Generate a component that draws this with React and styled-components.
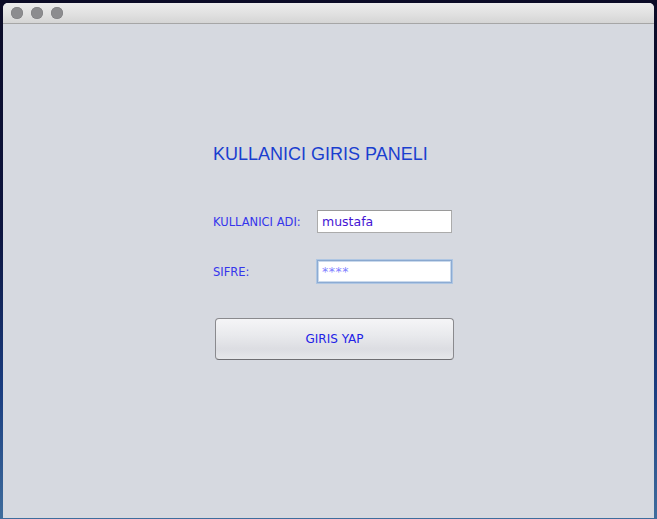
import React from "react";
import styled, { createGlobalStyle } from "styled-components";

const Global = createGlobalStyle`
  html, body { margin: 0; padding: 0; }
  body { width: 657px; height: 519px; overflow: hidden; }
`;

const Desktop = styled.div`
  width: 657px;
  height: 519px;
  box-sizing: border-box;
  padding: 3px 3px 1px 3px;
  display: flex;
  background: linear-gradient(180deg, #0b0b26 0%, #0d1540 45%, #1a3d80 75%, #3f6d9d 100%);
`;

const Window = styled.div`
  flex: 1;
  display: flex;
  flex-direction: column;
  border-radius: 5px 5px 0 0;
  overflow: hidden;
  background: #d6d9e0;
`;

const TitleBar = styled.div`
  height: 20px;
  flex: none;
  display: flex;
  align-items: center;
  gap: 8px;
  padding-left: 8px;
  background: linear-gradient(180deg, #ececec 0%, #e2e2e2 50%, #d5d5d5 100%);
  border-bottom: 1px solid #a6a6a6;
`;

const Light = styled.span`
  width: 12px;
  height: 12px;
  border-radius: 50%;
  background: #8c8c8f;
  box-shadow: inset 0 0 0 0.5px #7a7a7d;
`;

const Content = styled.div`
  flex: 1;
  padding: 120px 0 0 210px;
  font-family: "DejaVu Sans", Verdana, sans-serif;
`;

const Form = styled.div`
  width: 241px;
  display: flex;
  flex-direction: column;
`;

const Heading = styled.h1`
  margin: 0 0 46px 0;
  font-family: "Liberation Sans", Arial, sans-serif;
  font-weight: normal;
  font-size: 18px;
  line-height: 20px;
  color: #1a3fcf;
  white-space: nowrap;
`;

const Row = styled.div`
  display: grid;
  grid-template-columns: 104px 1fr;
  align-items: center;
  height: 23px;
  margin-bottom: ${(p) => p.$gap}px;
`;

const Label = styled.label`
  font-size: 11.5px;
  color: #3535ec;
  white-space: nowrap;
`;

const Field = styled.div`
  width: 135px;
  height: 23px;
  box-sizing: border-box;
  background: #fff;
  border: 1px solid ${(p) => (p.$focused ? "#8cabd3" : "#ababab")};
  border-top-color: ${(p) => (p.$focused ? "#8aa8cf" : "#9a9a9a")};
  display: flex;
  align-items: center;
  padding-left: 4px;
  font-size: 12.5px;
  color: ${(p) => (p.$masked ? "#7f7fff" : "#4414d4")};
  box-shadow: ${(p) =>
    p.$focused ? "0 0 0 1px #aec6e3, inset 0 0 0 1px #c9d9ec" : "none"};
  letter-spacing: ${(p) => (p.$masked ? "0.5px" : "0")};
`;

const Button = styled.button`
  margin-left: 2px;
  width: 239px;
  height: 42px;
  box-sizing: border-box;
  border: 1px solid #8a8a8e;
  border-bottom-color: #6e6e72;
  border-radius: 4px;
  background: linear-gradient(180deg, #f5f5f7 0%, #e9eaed 40%, #dcdde2 75%, #e6e7ea 100%);
  font-family: "DejaVu Sans", Verdana, sans-serif;
  font-size: 12px;
  color: #2222e6;
  padding: 0;
`;

export default function App() {
  return (
    <>
      <Global />
      <Desktop>
        <Window>
          <TitleBar>
            <Light />
            <Light />
            <Light />
          </TitleBar>
          <Content>
            <Form>
              <Heading>KULLANICI GIRIS PANELI</Heading>
              <Row $gap={27}>
                <Label>KULLANICI ADI:</Label>
                <Field>mustafa</Field>
              </Row>
              <Row $gap={35}>
                <Label>SIFRE:</Label>
                <Field $focused $masked>****</Field>
              </Row>
              <Button>GIRIS YAP</Button>
            </Form>
          </Content>
        </Window>
      </Desktop>
    </>
  );
}
